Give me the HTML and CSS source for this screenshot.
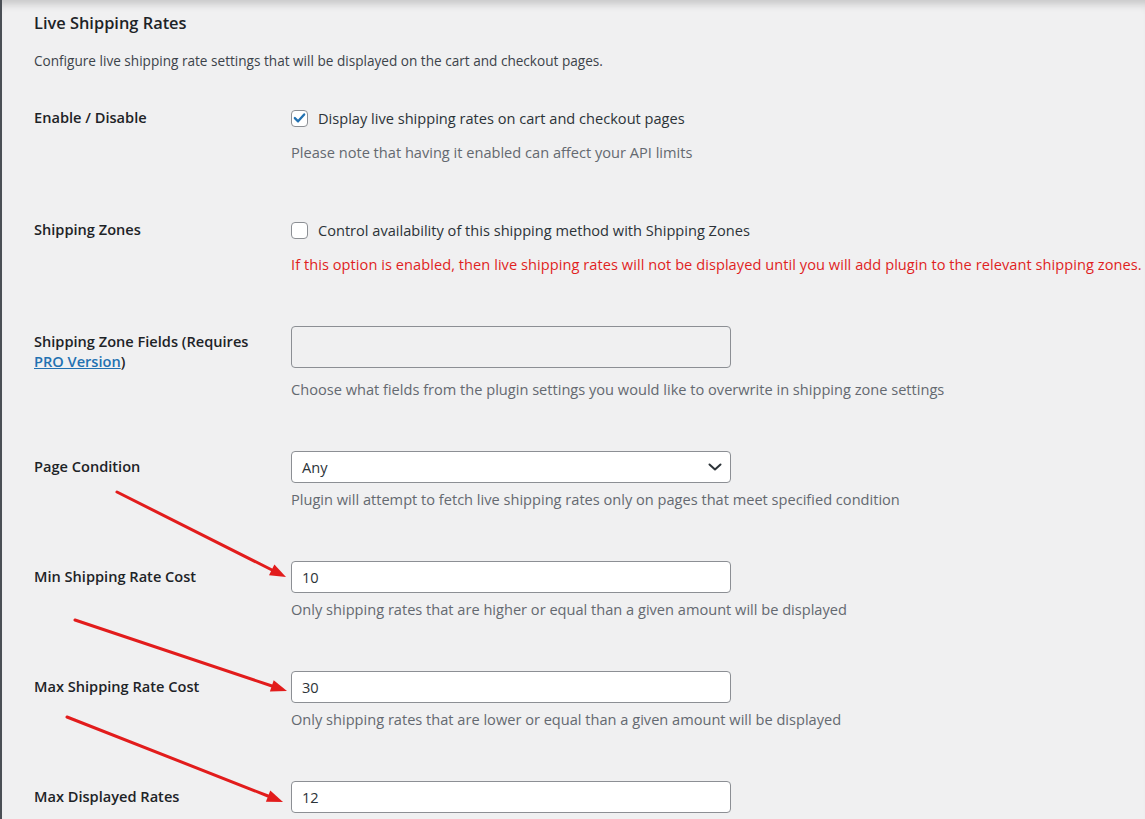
FILE: index.html
```html
<!DOCTYPE html>
<html lang="en">
<head>
<meta charset="utf-8">
<title>Live Shipping Rates</title>
<link rel="stylesheet" href="styles.css">
</head>
<body>
<div class="page">
  <h2 class="title">Live Shipping Rates</h2>
  <p class="intro">Configure live shipping rate settings that will be displayed on the cart and checkout pages.</p>

  <div class="form">
    <div class="row">
      <div class="label">Enable / Disable</div>
      <div class="field">
        <label class="check-line">
          <span class="cb"><svg viewBox="0 0 17 17" width="16" height="16"><polyline points="3.2,8.6 6.9,12.3 13.8,4.4" fill="none" stroke="#2271b1" stroke-width="2.6" stroke-linecap="round" stroke-linejoin="round"/></svg></span>
          <span>Display live shipping rates on cart and checkout pages</span>
        </label>
        <p class="desc desc-check">Please note that having it enabled can affect your API limits</p>
      </div>
    </div>

    <div class="row">
      <div class="label">Shipping Zones</div>
      <div class="field">
        <label class="check-line">
          <span class="cb"></span>
          <span>Control availability of this shipping method with Shipping Zones</span>
        </label>
        <p class="desc desc-check warn">If this option is enabled, then live shipping rates will not be displayed until you will add plugin to the relevant shipping zones.</p>
      </div>
    </div>

    <div class="row">
      <div class="label">Shipping Zone Fields (Requires <a class="pro" href="#">PRO Version</a>)</div>
      <div class="field">
        <div class="multi"></div>
        <p class="desc desc-multi">Choose what fields from the plugin settings you would like to overwrite in shipping zone settings</p>
      </div>
    </div>

    <div class="row">
      <div class="label">Page Condition</div>
      <div class="field">
        <div class="select">
          <span>Any</span>
          <svg class="chev" viewBox="0 0 14 8" width="14" height="8"><polyline points="1.5,1.5 7,6.5 12.5,1.5" fill="none" stroke="#2c3338" stroke-width="2" stroke-linecap="round" stroke-linejoin="round"/></svg>
        </div>
        <p class="desc">Plugin will attempt to fetch live shipping rates only on pages that meet specified condition</p>
      </div>
    </div>

    <div class="row">
      <div class="label">Min Shipping Rate Cost</div>
      <div class="field">
        <div class="input">10</div>
        <p class="desc">Only shipping rates that are higher or equal than a given amount will be displayed</p>
      </div>
    </div>

    <div class="row">
      <div class="label">Max Shipping Rate Cost</div>
      <div class="field">
        <div class="input">30</div>
        <p class="desc">Only shipping rates that are lower or equal than a given amount will be displayed</p>
      </div>
    </div>

    <div class="row row-last">
      <div class="label">Max Displayed Rates</div>
      <div class="field">
        <div class="input">12</div>
      </div>
    </div>
  </div>

  <svg class="arrows" width="1145" height="819" viewBox="0 0 1145 819">
    <g stroke="#e21c1c" stroke-width="3" stroke-linecap="round" fill="#e21c1c">
      <line x1="117" y1="492" x2="272" y2="570"/>
      <polygon stroke="none" points="286,577 269,575.2 274.4,564.4"/>
      <line x1="75" y1="620" x2="272" y2="686"/>
      <polygon stroke="none" points="287,691 269.9,691.6 273.7,680.2"/>
      <line x1="67" y1="717" x2="268" y2="796"/>
      <polygon stroke="none" points="283,802 265.9,801.7 270.3,790.6"/>
    </g>
  </svg>
</div>
</body>
</html>
```

FILE: styles.css
```css
* { box-sizing: border-box; }

html, body {
  margin: 0;
  padding: 0;
  background: #f0f0f1;
}

body {
  font-family: "Open Sans", "Noto Sans", sans-serif;
  color: #1d2327;
  overflow: hidden;
}

.page {
  position: relative;
  height: 819px;
  overflow: hidden;
  border-left: 2px solid #4a4f55;
  padding: 12px 0 0 32px;
  box-shadow: inset 0 10px 8px -6px rgba(0, 0, 0, 0.18);
}

.title {
  margin: 0;
  font-size: 16.4px;
  line-height: 22px;
  font-weight: 600;
  color: #1d2327;
}

.intro {
  margin: 17px 0 0;
  font-size: 13.6px;
  line-height: 20px;
  color: #3c434a;
}

.form {
  margin-top: 31px;
  display: flex;
  flex-direction: column;
}

.row {
  display: grid;
  grid-template-columns: 257px 1fr;
  padding-bottom: 51px;
}

.row-last { padding-bottom: 0; }

.label {
  padding: 5px 30px 0 0;
  font-size: 14.6px;
  line-height: 20px;
  font-weight: 600;
  color: #1d2327;
}

.pro {
  color: #2271b1;
  text-decoration: underline;
}

.field {
  font-size: 14.6px;
  color: #2c3338;
  white-space: nowrap;
}

.check-line {
  display: flex;
  align-items: center;
  height: 32px;
  gap: 10px;
}

.cb {
  width: 17px;
  height: 17px;
  flex: none;
  border: 1px solid #8c8f94;
  border-radius: 4px;
  background: #fff;
  display: flex;
  align-items: center;
  justify-content: center;
}

.desc {
  margin: 5px 0 0;
  font-size: 14.6px;
  line-height: 22px;
  color: #646970;
}

.desc-check { margin-top: 7px; }
.desc-multi { margin-top: 10px; }

.warn {
  color: #e01f1f;
  letter-spacing: 0.05px;
}

.multi {
  width: 440px;
  height: 42px;
  border: 1px solid #8c8f94;
  border-radius: 4px;
  background: #f0f0f1;
}

.select,
.input {
  width: 440px;
  height: 32px;
  border: 1px solid #8c8f94;
  border-radius: 4px;
  background: #fff;
  padding: 0 10px;
  display: flex;
  align-items: center;
  color: #2c3338;
  font-size: 14.6px;
}

.select { justify-content: space-between; padding-right: 8px; }

.chev { flex: none; }

.arrows {
  position: absolute;
  left: -2px;
  top: 0;
  pointer-events: none;
}
```
